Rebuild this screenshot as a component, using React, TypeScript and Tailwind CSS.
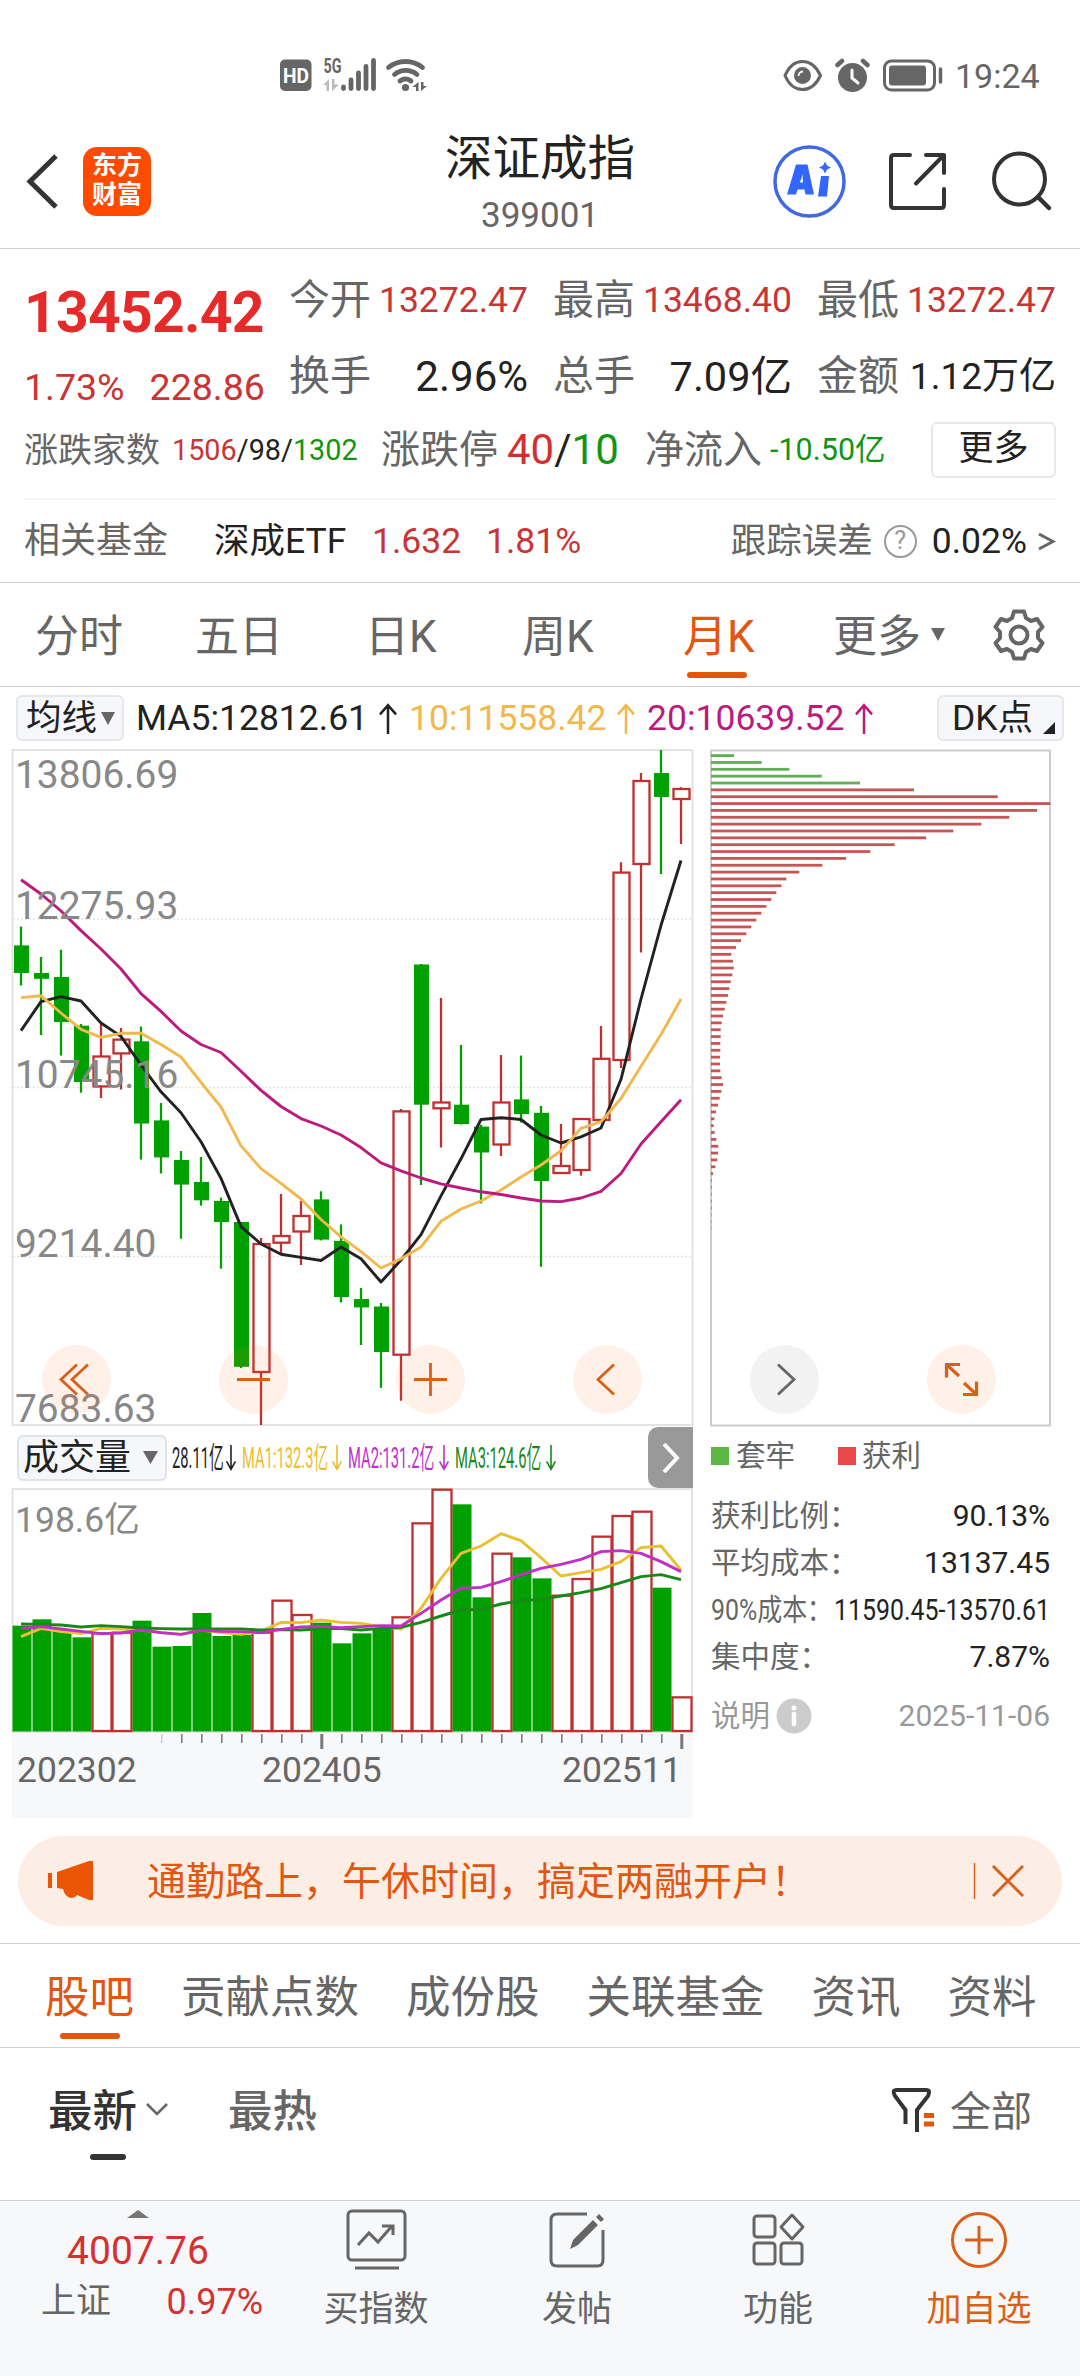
import React from 'react';

const RED = '#c03030';
const GREEN = '#00a000';

// [high, top, bottom, low, up]
const candles: [number, number, number, number, number][] = [
  [926.6, 945.4, 973, 985.5, 0],
  [957, 973, 978.8, 1035, 0],
  [949.8, 977, 1022, 1055.6, 0],
  [1024, 1025.7, 1082, 1092.7, 0],
  [1024, 1056.5, 1086.4, 1098, 1],
  [1028, 1039.6, 1053.4, 1089.6, 1],
  [1026.6, 1041.3, 1123.5, 1159.6, 0],
  [1103, 1120.4, 1157.4, 1173.5, 0],
  [1151, 1160, 1184.6, 1238.7, 0],
  [1157, 1182, 1200.3, 1205.6, 0],
  [1197.6, 1201, 1222, 1268.6, 0],
  [1222, 1222, 1366.8, 1368, 0],
  [1238, 1244, 1372, 1425, 1],
  [1194, 1236, 1242.7, 1254.7, 1],
  [1201, 1216, 1231.5, 1265, 1],
  [1191.3, 1199.4, 1239.6, 1240.4, 0],
  [1224.4, 1241, 1297, 1302.5, 0],
  [1288, 1299, 1307.4, 1345, 0],
  [1303, 1306.5, 1352, 1387.8, 0],
  [1109, 1111.4, 1354.7, 1400.7, 1],
  [964, 964.5, 1104.7, 1185, 0],
  [998, 1102.5, 1108.3, 1147.6, 1],
  [1045, 1104.7, 1124, 1124.5, 0],
  [1124.8, 1126.6, 1152.5, 1203.4, 0],
  [1055, 1102.5, 1144.5, 1156, 1],
  [1055.6, 1099.4, 1114, 1122.6, 0],
  [1106, 1112.8, 1181, 1266.8, 0],
  [1124, 1166, 1173, 1173, 1],
  [1119, 1119, 1170, 1175.7, 1],
  [1026, 1058.8, 1120, 1120, 1],
  [862.3, 872.6, 1060, 1068, 1],
  [773, 781, 864, 952.5, 1],
  [750, 773, 797, 874, 0],
  [787.3, 789, 799, 844, 1],
];

const ma5 = [1030.6, 1001.6, 996.7, 1001, 1023, 1036.4, 1065, 1091.8, 1112.8, 1141.8, 1178.4, 1226.6, 1244, 1254.3, 1257.4, 1260.5, 1247, 1258.8, 1282, 1260, 1234.6, 1195.8, 1158.8, 1119.5, 1117.7, 1119.5, 1135, 1143, 1136.9, 1128, 1079.3, 999, 925.3, 860.5];
const ma10 = [997.6, 995.8, 1013, 1029.3, 1037.3, 1033.3, 1033.3, 1044.5, 1057, 1082.4, 1107, 1145.8, 1168.6, 1183.3, 1199, 1219.5, 1236.9, 1251.6, 1268, 1258.8, 1247, 1221.3, 1209, 1201, 1190, 1177, 1165, 1150.7, 1128.4, 1121.7, 1098.5, 1066.3, 1034.6, 999];
const ma20 = [879.7, 894, 911, 930.6, 949, 969, 993.6, 1011.4, 1031, 1044.5, 1052.5, 1071.3, 1090.4, 1106.5, 1118.6, 1126, 1135, 1147.6, 1162.8, 1170.8, 1178, 1183.8, 1188, 1191.8, 1194.5, 1198, 1201, 1201.6, 1198, 1191.3, 1173.5, 1144, 1121.7, 1099.8];

// bar tops, negative = hollow red bar
const volumes = [647, 628, 657, 682, -670, -668, 632, 710, 708, 609, 678, 675, -668, -572, -615, 638, 700, 670, 657, -622, -340, -239, 283, 562, -431, 442, 505, -557, -507, -380, -318, -305, 533, -862];
const vol1 = [680, 655, 665, 671, 655, 657, 660, 668, 673, 660, 668, 673, 664, 637, 638, 630, 637, 640, 650, 657, 595, 505, 430, 408, 371, 392, 443, 498, 488, 478, 455, 413, 408, 480];
const vol2 = [655, 650, 657, 664, 671, 669, 660, 668, 673, 661, 664, 665, 668, 658, 651, 649, 653, 650, 647, 648, 610, 570, 535, 532, 515, 494, 475, 463, 448, 425, 422, 430, 455, 485];
const vol3 = [642, 643, 645, 651, 647, 650, 654, 656, 657, 657, 657, 657, 660, 659, 660, 656, 656, 660, 655, 652, 637, 618, 600, 598, 582, 572, 568, 558, 548, 536, 518, 500, 494, 509];

const chips = [131, 214, 297, 394, 509, 671, 922, 1080, 1040, 957, 873, 789, 707, 613, 540, 467, 396, 327, 288, 273, 258, 243, 228, 213, 198, 183, 168, 152, 137, 123, 128, 130, 126, 121, 117, 113, 108, 103, 98, 94, 91, 91, 90, 90, 89, 89, 90, 94, 98, 93, 88, 83, 77, 72, 70, 73, 78, 84, 83, 81, 75, 68, 64, 64, 64, 64, 64, 63, 63, 63];

const line = (ys: number[]) => ys.map((y, i) => `${21 + i * 20},${y}`).join(' ');
const volY = (v: number) => 1410 + Math.abs(v) / 3;

const StatusBar = () => (
  <div className="flex h-[130px] items-start pt-[58px] text-[#666]">
    <svg className="ml-[280px] h-[34px] w-[148px] overflow-visible" viewBox="280 58 148 34" fill="none" stroke="#666">
      <rect x="280" y="59.500" width="31.500" height="31.500" rx="5" fill="#666" stroke="none" />
      <text x="296" y="82.500" fontSize="20" fontWeight="700" fill="#fff" stroke="none" textAnchor="middle" textLength="26" lengthAdjust="spacingAndGlyphs">HD</text>
      <text x="323.500" y="72.500" fontSize="20" fontWeight="700" fill="#666" stroke="none" textLength="18" lengthAdjust="spacingAndGlyphs">5G</text>
      <path d="M329 79V91H326.500V85H323ZM332 79V91L339 84.500H334.500V79Z" fill="#bbb" stroke="none" />
      <path d="M343.500 87V88.500M351 80V88.500M358.500 73V88.500M366 66.500V88.500M373.500 60.500V88.500" strokeWidth="4.800" strokeLinecap="round" />
      <path d="M388.500 67.500A27 27 0 0 1 422.500 67.500M394.500 74.500A17.500 17.500 0 0 1 417 74.500M400 81A9.500 9.500 0 0 1 411 81" strokeWidth="4.800" strokeLinecap="round" />
      <circle cx="405.500" cy="87.500" r="3.600" fill="#666" stroke="none" />
      <path d="M418.500 82V91H416V87H412.500ZM421 82V91L427 86H423.500V82Z" fill="#666" stroke="none" />
    </svg>
    <svg className="ml-[355px] h-[34px] w-[162px]" viewBox="783 58 162 34" fill="none" stroke="#666">
      <path d="M785 75.500Q791 61.500 802.500 61.500Q814 61.500 820.500 75.500Q814 89.500 802.500 89.500Q791 89.500 785 75.500Z" strokeWidth="3" />
      <circle cx="802.500" cy="75.500" r="8.500" fill="#666" stroke="none" />
      <path d="M798.500 76A4.500 4.500 0 0 1 803 71.500" stroke="#fff" strokeWidth="1.800" />
      <circle cx="852.500" cy="77.500" r="14.500" fill="#666" stroke="none" />
      <path d="M837.500 65L842 61M867.500 65L863 61" strokeWidth="4.500" strokeLinecap="round" />
      <path d="M852 70V78L858 83" stroke="#fff" strokeWidth="3" strokeLinecap="round" />
      <rect x="884.500" y="61" width="50" height="29" rx="7" strokeWidth="3" />
      <rect x="889" y="65.500" width="37" height="20" rx="3" fill="#666" stroke="none" />
      <path d="M940.500 69V82" strokeWidth="3.500" strokeLinecap="round" />
    </svg>
    <span className="ml-[10px] text-[34px] leading-[36px]">19:24</span>
  </div>
);

const Header = () => (
  <header className="flex h-[119px] items-center border-b border-[#cfcfcf] pb-[16px]">
    <svg className="ml-[26px] h-[56px] w-[34px]" viewBox="26 153 34 56" fill="none" stroke="#333" strokeWidth="5">
      <path d="M56 156L30 181.500L56 207" />
    </svg>
    <div className="ml-[23px] flex h-[69px] w-[68px] flex-col items-center justify-center rounded-[14px] bg-[#ff4a00] pb-[3px] text-[25px] font-bold leading-[29px] text-white">
      <span>东方</span>
      <span>财富</span>
    </div>
    <div className="ml-[289px] flex w-[200px] flex-col items-center pt-[8px]">
      <span className="text-[47.500px] leading-[56px] text-[#222]">深证成指</span>
      <span className="mt-[6px] text-[35px] leading-[46px] text-[#666]">399001</span>
    </div>
    <svg className="ml-[131px] h-[76px] w-[284px]" viewBox="770 143 284 76" fill="none" stroke="#333" strokeWidth="4" strokeLinecap="round" strokeLinejoin="round">
      <circle cx="808.500" cy="181.500" r="34.500" stroke="#4169e1" strokeWidth="3.500" />
      <path d="M795 164.500H806.500L813 194.500H804.500L803.500 189.500H796.500L795 194.500H786ZM799 182.500H802L801.500 174.500Z" fill="#3366ff" stroke="none" fillRule="evenodd" />
      <path d="M820 176H828L826 196.500H817Z" fill="#3366ff" stroke="none" />
      <path d="M824 161.500L826 165.500L830 167.500L826 169.500L824 173.500L822 169.500L818 167.500L822 165.500Z" fill="#3366ff" stroke="none" />
      <path d="M909 155H893Q890 155 890 158V205Q890 208 893 208H940Q943 208 943 205V189M925 155H943V173M941 157L915 183.500" />
      <circle cx="1018.500" cy="179" r="25.500" />
      <path d="M1037 197L1048 208" strokeWidth="4.500" />
    </svg>
  </header>
);

const Metric = ({ label, value, size, tone }: { label: string; value: string; size: string; tone: string }) => (
  <div className="flex items-center justify-between">
    <span className="text-[41px] text-[#666]">{label}</span>
    <span className={`${size} ${tone}`}>{value}</span>
  </div>
);

const Quote = () => (
  <section className="h-[334px] border-b border-[#cfcfcf] px-6">
    <div className="flex h-[155px]">
      <div className="flex w-[265px] flex-col text-[#d32f2f]">
        <span className="mt-[29px] text-[57px] font-bold leading-[70px] tracking-[-0.700px] text-[#e62a2a]">13452.42</span>
        <div className="mt-[14px] flex gap-[25px] text-[37.500px] leading-[50px] text-[#c93434]">
          <span>1.73%</span>
          <span>228.86</span>
        </div>
      </div>
      <div className="grid h-[165px] w-[767px] grid-cols-3 grid-rows-2 gap-x-[25px] pt-[14px] leading-[75px]">
        <Metric label="今开" value="13272.47" size="text-[35.500px]" tone="text-[#c93434]" />
        <Metric label="最高" value="13468.40" size="text-[35.500px]" tone="text-[#c93434]" />
        <Metric label="最低" value="13272.47" size="text-[35.500px]" tone="text-[#c93434]" />
        <Metric label="换手" value="2.96%" size="text-[42px]" tone="text-[#222]" />
        <Metric label="总手" value="7.09亿" size="text-[41.500px]" tone="text-[#222]" />
        <Metric label="金额" value="1.12万亿" size="text-[37px]" tone="text-[#222]" />
      </div>
    </div>
    <div className="flex h-[96px] items-center border-b-[2px] border-[#f4f4f4] pb-[2px] leading-[50px] text-[#666]">
      <span className="w-[148px] text-[34px]">涨跌家数</span>
      <span className="w-[209px] text-[28.800px] text-[#222]">
        <span className="text-[#c93434]">1506</span>/98/<span className="text-[#119611]">1302</span>
      </span>
      <span className="w-[126px] text-[39px]">涨跌停</span>
      <span className="w-[138px] text-[42px] text-[#222]">
        <span className="text-[#d32f2f]">40</span>/<span className="text-[#119611]">10</span>
      </span>
      <span className="w-[125px] text-[39px]">净流入</span>
      <span className="text-[30.500px] text-[#119611]">-10.50亿</span>
      <button className="ml-auto h-[56px] w-[125px] rounded-[6px] border-2 border-[#e8e8e8] pb-[2px] text-[35px] text-[#222]">更多</button>
    </div>
    <div className="flex h-[82px] items-center text-[35.500px] leading-[50px] text-[#222]">
      <span className="w-[190px] text-[36px] text-[#666]">相关基金</span>
      <span className="w-[158px]">深成ETF</span>
      <span className="w-[114px] text-[#c93434]">1.632</span>
      <span className="text-[#c93434]">1.81%</span>
      <span className="ml-auto text-[#666]">跟踪误差</span>
      <span className="ml-[11px] flex size-[33px] items-center justify-center rounded-full border-2 border-[#999] text-[25px] text-[#999]">?</span>
      <span className="ml-[15px]">0.02%</span>
      <svg className="ml-[11px] h-[20px] w-[18px]" viewBox="0 0 18 20" fill="none" stroke="#666" strokeWidth="3">
        <path d="M1 3L15 10.500L1 18" />
      </svg>
    </div>
  </section>
);

const Periods = () => (
  <nav className="flex h-[104px] items-center border-b border-[#cfcfcf] text-[44px] leading-[60px] text-[#666]">
    <span className="ml-[35px] w-[160px] pt-[5px]">分时</span>
    <span className="w-[170px] pt-[5px]">五日</span>
    <span className="w-[157px] pt-[5px]">日K</span>
    <span className="w-[161px] pt-[5px]">周K</span>
    <span className="relative w-[150px] pt-[5px] text-[#e2570f]">
      月K
      <i className="absolute left-[4px] top-[70px] h-[6px] w-[60px] rounded-full bg-[#e2570f]" />
    </span>
    <span className="pt-[5px]">更多</span>
    <svg className="ml-[9px] h-[13px] w-[16px]" viewBox="0 0 16 13" fill="#666">
      <path d="M1 0H15L8 13Z" />
    </svg>
    <svg className="ml-[46px] h-[54px] w-[54px]" viewBox="-27 -27 54 54" fill="none" stroke="#666" strokeWidth="4">
      <path d="M-5 -23.500H5L7 -17L12 -14L18 -16L23.500 -8L19 -3V3L23.500 8L18 16L12 14L7 17L5 23.500H-5L-7 17L-12 14L-18 16L-23.500 8L-19 3V-3L-23.500 -8L-18 -16L-12 -14L-7 -17Z" strokeLinejoin="round" />
      <circle r="8.500" />
    </svg>
  </nav>
);

const Arrow = ({ down, className }: { down?: boolean; className: string }) => (
  <svg className={className} viewBox="0 0 18 30" preserveAspectRatio="none" fill="none" stroke="currentColor" strokeWidth={down ? 1.6 : 2.5}>
    <path d={down ? 'M9 0V28M1 19L9 28L17 19' : 'M9 30V2M1 11L9 2L17 11'} vectorEffect="non-scaling-stroke" />
  </svg>
);

const MaRow = () => (
  <div className="flex h-[62px] items-center text-[35.500px] leading-[44px] text-[#222]">
    <div className="ml-4 flex h-[46px] w-[108px] items-center rounded-[6px] border-2 border-[#e6e8ea] bg-[#f5f7fa] pl-[8px]">
      均线
      <svg className="ml-[4px] h-[13px] w-[14px]" viewBox="0 0 14 13" fill="#666"><path d="M0 0H14L7 13Z" /></svg>
    </div>
    <span className="ml-[12px] w-[243px]">MA5:12812.61</span>
    <Arrow className="h-[31px] w-[18px]" />
    <div className="ml-[12px] flex items-center text-[#f2b84b]">
      <span className="w-[208px]">10:11558.42</span>
      <Arrow className="h-[31px] w-[18px]" />
    </div>
    <div className="ml-[12px] flex items-center text-[#bd1a7d]">
      <span className="w-[208px]">20:10639.52</span>
      <Arrow className="h-[31px] w-[18px]" />
    </div>
    <div className="ml-auto mr-4 flex h-[46px] w-[127px] items-center rounded-[6px] border-2 border-[#e6e8ea] bg-[#f5f7fa] pl-[13px]">
      DK点
      <svg className="ml-[10px] mt-[20px] h-[12px] w-[12px]" viewBox="0 0 12 12" fill="#222"><path d="M12 0V12H0Z" /></svg>
    </div>
  </div>
);

const KLine = () => (
  <svg className="block h-[678px] w-[1080px] overflow-visible" viewBox="0 749 1080 678" fill="none">
    <rect x="12.500" y="750" width="680" height="675" stroke="#e3e3e3" strokeWidth="2" />
    <path d="M13 919H692M13 1087.500H692M13 1256.500H692" stroke="#e4e4e4" strokeWidth="1.500" strokeDasharray="2 2" />
    {candles.map(([h, t, b, l, up], i) => {
      const x = 21 + i * 20;
      return up ? (
        <g key={i} stroke={RED} strokeWidth="2.300">
          <path d={`M${x} ${h}V${t}M${x} ${b}V${l}`} />
          <rect x={x - 7.5} y={t} width="16" height={b - t} />
        </g>
      ) : (
        <g key={i}>
          <path d={`M${x} ${h}V${l}`} stroke={GREEN} strokeWidth="2.300" />
          <rect x={x - 7} y={t} width="15" height={b - t} fill={GREEN} />
        </g>
      );
    })}
    <g strokeWidth="2.900" strokeLinejoin="round">
      <polyline points={line(ma5)} stroke="#222" />
      <polyline points={line(ma10)} stroke="#f2b84b" />
      <polyline points={line(ma20)} stroke="#bd1a7d" />
    </g>
    <g fontSize="38.900" fill="#888">
      <text x="15" y="788">13806.69</text>
      <text x="15" y="919">12275.93</text>
      <text x="15" y="1088">10745.16</text>
      <text x="15" y="1257">9214.40</text>
      <text x="15" y="1421.500">7683.63</text>
    </g>

    <rect x="711" y="750.500" width="339" height="675" stroke="#ccc" strokeWidth="2" />
    {chips.map((c, i) => (
      <rect key={i} x="711" y={754.2 + i * 6.853} width={(c - 62) / 3} height="2.800" fill={i < 5 ? '#62ae57' : '#c85454'} />
    ))}

    <g fill="#ff6a20" fillOpacity="0.1">
      <circle cx="76.500" cy="1379.500" r="34.500" />
      <circle cx="253.500" cy="1379.500" r="34.500" />
      <circle cx="430.500" cy="1379.500" r="34.500" />
      <circle cx="607.500" cy="1379.500" r="34.500" />
      <circle cx="784.500" cy="1379.500" r="34.500" fill="#808080" />
      <circle cx="961.500" cy="1379.500" r="34.500" />
    </g>
    <g stroke="#d9601a" strokeWidth="2.800">
      <path d="M77 1364.500L61 1379.500L77 1394.500M88 1364.500L72 1379.500L88 1394.500" />
      <path d="M237 1379.500H270" />
      <path d="M414 1379.500H447M430.500 1363V1396" />
      <path d="M614 1364.500L598 1379.500L614 1394.500" />
      <path d="M778 1364.500L794 1379.500L778 1394.500" stroke="#666" />
      <path d="M960 1364.500H946.500V1377.500M947 1365L959 1376M963 1394.500H976.500V1381.500M976 1394L964 1383" strokeWidth="3.200" />
    </g>
  </svg>
);

const VolumeMa = ({ text, tone, width }: { text: string; tone: string; width: string }) => (
  <div className={`flex items-center ${tone}`}>
    <span className={`${width} whitespace-nowrap`}>
      <span className="inline-block origin-left scale-x-50">{text}</span>
    </span>
    <Arrow down className="h-[26px] w-[10px] shrink-0" />
  </div>
);

const Volume = () => (
  <div className="w-[693px] shrink-0">
    <div className="flex h-[61px] items-center text-[29.500px] leading-[40px]">
      <div className="ml-[17px] flex h-[46px] w-[150px] shrink-0 items-center rounded-[6px] border-2 border-[#dfe3ea] bg-[#f5f7fa] pl-[4px] text-[36px] text-[#222]">
        成交量
        <svg className="ml-[12px] h-[13px] w-[15px]" viewBox="0 0 15 13" fill="#666"><path d="M0 0H15L7.500 13Z" /></svg>
      </div>
      <div className="ml-[5px] flex w-[476px] shrink-0 gap-[6px] overflow-hidden">
        <VolumeMa text="28.11亿" width="w-[54px]" tone="text-[#222]" />
        <VolumeMa text="MA1:132.3亿" width="w-[90px]" tone="text-[#edbd2f]" />
        <VolumeMa text="MA2:131.2亿" width="w-[91px]" tone="text-[#bd32c8]" />
        <VolumeMa text="MA3:124.6亿" width="w-[91px]" tone="text-[#1a871a]" />
      </div>
      <div className="flex h-[61px] w-[45px] shrink-0 items-center justify-center rounded-l-[10px] bg-[#999]">
        <svg className="h-[30px] w-[18px]" viewBox="0 0 18 30" fill="none" stroke="#fff" strokeWidth="4"><path d="M2 1L15 15L2 29" /></svg>
      </div>
    </div>
    <svg className="block h-[332px] w-[693px]" viewBox="0 1488 693 332" fill="none">
      <rect x="12" y="1734" width="681" height="84" fill="#f7f8fa" />
      <rect x="12.500" y="1489" width="679.500" height="243" stroke="#e3e3e3" strokeWidth="2" />
      <text x="15" y="1531.500" fontSize="35.500" fill="#888">198.6亿</text>
      {volumes.map((v, i) =>
        v < 0 ? (
          <rect key={i} x={12.500 + i * 20} y={volY(v)} width="19" height={1731 - volY(v)} stroke={RED} strokeWidth="2.300" />
        ) : (
          <rect key={i} x={12.500 + i * 20} y={volY(v)} width="19" height={1731.500 - volY(v)} fill={GREEN} />
        )
      )}
      <g strokeWidth="2.900" strokeLinejoin="round">
        <polyline points={line(vol1.map(volY))} stroke="#ebc030" />
        <polyline points={line(vol3.map(volY))} stroke="#1a871a" />
        <polyline points={line(vol2.map(volY))} stroke="#c32fc6" />
      </g>
      {volumes.map((_, i) => {
        const major = i === 15 || i === 33;
        return i > 6 ? (
          <path key={i} d={`M${21.800 + i * 20} 1734V${major ? 1749 : 1743}`} stroke={i === 7 ? '#ccc' : '#777'} strokeWidth={major ? 3 : 1.500} />
        ) : null;
      })}
      <g fontSize="35.500" fill="#666">
        <text x="17" y="1782">202302</text>
        <text x="262" y="1782">202405</text>
        <text x="562" y="1782">202511</text>
      </g>
    </svg>
  </div>
);

const ChipRow = ({ label, value, narrow }: { label: string; value: string; narrow?: boolean }) => (
  <div className="flex h-[47px] items-center justify-between whitespace-nowrap">
    <span className={narrow ? 'w-[105px] origin-left scale-x-[.83] text-[30px]' : 'text-[29.500px]'}>{label}</span>
    <span className={narrow ? 'flex w-[215px] origin-right scale-x-[.83] justify-end text-[30px] text-[#222]' : 'text-[30px] text-[#222]'}>{value}</span>
  </div>
);

const ChipPanel = () => (
  <div className="ml-[18px] w-[339px] text-[#666]">
    <div className="flex h-[58px] items-center text-[29.500px] leading-[40px]">
      <i className="mr-[7px] size-[18px] bg-[#5cb746]" />
      套牢
      <i className="ml-[43px] mr-[6px] size-[18px] bg-[#e84848]" />
      获利
    </div>
    <div className="pt-[7px] leading-[40px]">
      <ChipRow label="获利比例：" value="90.13%" />
      <ChipRow label="平均成本：" value="13137.45" />
      <ChipRow label="90%成本：" value="11590.45-13570.61" narrow />
      <ChipRow label="集中度：" value="7.87%" />
    </div>
    <div className="mt-[13px] flex h-[46px] items-center text-[29.500px] leading-[40px] text-[#999]">
      说明
      <svg className="ml-[6px] size-[36px]" viewBox="0 0 36 36">
        <circle cx="18" cy="18" r="17.500" fill="#ccc" />
        <circle cx="18" cy="10" r="2.500" fill="#fff" />
        <path d="M18 16V26" stroke="#fff" strokeWidth="4.500" strokeLinecap="round" />
      </svg>
      <span className="ml-auto text-[30px]">2025-11-06</span>
    </div>
  </div>
);

const Banner = () => (
  <div className="mx-[18px] mt-[16px] flex h-[90px] items-center rounded-full bg-[#fdeee5] text-[39px] leading-[50px] text-[#e2570f]">
    <svg className="ml-[29px] h-[42px] w-[48px]" viewBox="47 1860 48 42" fill="#eb5505">
      <path d="M48 1873H52V1888H48ZM57 1872L89 1861H93V1900H89L77 1895Q75 1898 71 1898Q65 1897 63 1889L57 1888Z" />
    </svg>
    <span className="ml-[52px] whitespace-nowrap pt-[1px]">通勤路上，午休时间，搞定两融开户！</span>
    <svg className="ml-auto mr-[38px] h-[38px] w-[52px] shrink-0" viewBox="972 1862 52 38" fill="none" stroke="#d9601a">
      <path d="M974.500 1863V1899" strokeWidth="1.500" />
      <path d="M993 1866L1023 1896M1023 1866L993 1896" strokeWidth="3" />
    </svg>
  </div>
);

const Community = () => (
  <>
    <nav className="mt-[17px] flex h-[105px] items-center gap-[47px] border-y border-[#cfcfcf] pl-[45px] pt-[5px] text-[44.500px] leading-[60px] text-[#666]">
      <span className="relative text-[#e2570f]">
        股吧
        <i className="absolute left-[15px] top-[65px] h-[6px] w-[60px] rounded-full bg-[#e2570f]" />
      </span>
      {['贡献点数', '成份股', '关联基金', '资讯', '资料'].map((t) => (
        <span key={t} className="whitespace-nowrap">{t}</span>
      ))}
    </nav>
    <div className="flex h-[152px] items-start pt-[34px] text-[44.500px] leading-[60px]">
      <span className="relative ml-[48px] font-medium text-[#333]">
        最新
        <i className="absolute left-[42px] top-[72px] h-[6px] w-[36px] rounded-full bg-[#333]" />
      </span>
      <svg className="ml-[8px] mt-[20px] h-[14px] w-[24px]" viewBox="0 0 24 14" fill="none" stroke="#666" strokeWidth="2.500"><path d="M2 2L12 12L22 2" /></svg>
      <span className="ml-[59px] font-medium text-[#666]">最热</span>
      <svg className="ml-auto mt-[4px] h-[48px] w-[46px]" viewBox="890 2085 46 48" fill="none" stroke="#333" strokeWidth="4">
        <path d="M904.500 2123V2109L894 2095Q890.500 2089 896 2089H925Q930 2089 927 2095L916 2109V2131" />
        <path d="M923 2114.500H933M923 2123H933" stroke="#e2570f" strokeWidth="5" />
      </svg>
      <span className="ml-[13px] mr-[48px] text-[41px] text-[#666]">全部</span>
    </div>
  </>
);

const Tab = ({ label, className, children }: { label: string; className: string; children: React.ReactNode }) => (
  <div className={`flex flex-col items-center ${className}`}>
    <svg className="mt-[7px] size-[64px]" viewBox="-32 -32 64 64" fill="none" stroke="currentColor" strokeWidth="3">{children}</svg>
    <span className="mt-[13px] text-[35px] leading-[50px]">{label}</span>
  </div>
);

const BottomBar = () => (
  <footer className="flex h-[177px] border-t border-[#cfcfcf] bg-[#f7f8fa] text-[#666]">
    <div className="flex w-[276px] flex-col items-center">
      <svg className="mt-[9px] h-[8px] w-[22px]" viewBox="0 0 22 8" fill="#777"><path d="M11 0L22 8H0Z" /></svg>
      <span className="mt-[8px] text-[39px] leading-[50px] text-[#d63030]">4007.76</span>
      <div className="ml-[28px] flex w-[222px] items-center justify-between pt-[2px] text-[35px] leading-[48px]">
        上证
        <span className="text-[36px] text-[#d63030]">0.97%</span>
      </div>
    </div>
    <Tab label="买指数" className="w-[200px]">
      <rect x="-28" y="-29" width="57" height="49" rx="4" />
      <path d="M-18 5L-7 -7L2 2L16 -14M6 -14H17V-5M-21 28H23" />
    </Tab>
    <Tab label="发帖" className="w-[202px]">
      <path d="M10 -26H-20Q-26 -26 -26 -20V20Q-26 26 -20 26H20Q26 26 26 20V-10" />
      <path d="M-7 9L-4 0L16 -20L21 -15L1 5ZM19 -23L22 -26L27 -21L24 -18Z" fill="currentColor" stroke="none" />
    </Tab>
    <Tab label="功能" className="w-[200px]">
      <rect x="-24" y="-24" width="21" height="21" rx="3" />
      <rect x="-24" y="3" width="21" height="21" rx="3" />
      <rect x="3" y="3" width="21" height="21" rx="3" />
      <path d="M14 -25L25 -13L14 -1L3 -13Z" strokeLinejoin="round" />
    </Tab>
    <Tab label="加自选" className="w-[202px] text-[#d9601a]">
      <circle r="26.500" />
      <path d="M-14 0H14M0 -14V14" />
    </Tab>
  </footer>
);

export default function App() {
  return (
    <div className="h-[2376px] w-[1080px] overflow-hidden bg-white font-['Roboto','Noto_Sans_CJK_SC',sans-serif]">
      <StatusBar />
      <Header />
      <Quote />
      <Periods />
      <MaRow />
      <KLine />
      <div className="flex h-[393px]">
        <Volume />
        <ChipPanel />
      </div>
      <Banner />
      <Community />
      <BottomBar />
    </div>
  );
}
